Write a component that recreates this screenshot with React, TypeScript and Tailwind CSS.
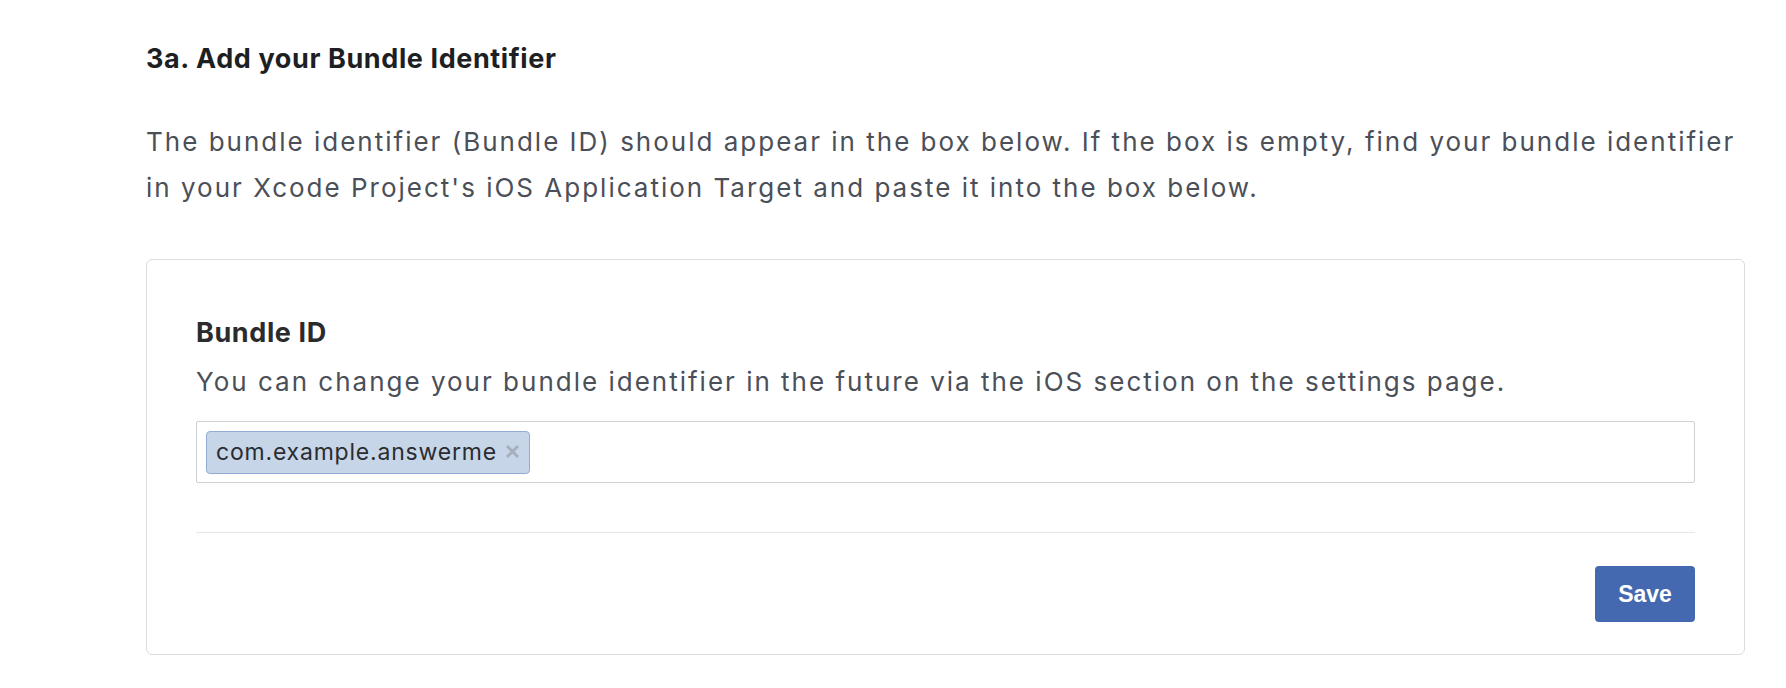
export default function App() {
  const font = { fontFamily: "Inter, 'Noto Sans', sans-serif" };
  return (
    <div className="min-h-screen bg-white pl-[146px] pr-[41px] pt-[43px]" style={font}>
      <h2 className="text-[27px] leading-[32px] font-bold tracking-[0.6px] text-[#1e1f23]">
        3a. Add your Bundle Identifier
      </h2>
      <p className="mt-[44px] whitespace-nowrap text-[26px] leading-[46px] tracking-[2px] text-[#4b4f58]">
        The bundle identifier (Bundle ID) should appear in the box below. If the box is empty, find your bundle identifier
        <br />
        in your Xcode Project's iOS Application Target and paste it into the box below.
      </p>

      <div className="mt-[48px] rounded-[6px] border border-[#dcdce1] px-[49px] pt-[57px] pb-[32px]">
        <div className="text-[27px] leading-[32px] font-bold tracking-[0.6px] text-[#2b2b2e]">Bundle ID</div>
        <div className="mt-[17px] whitespace-nowrap text-[26px] leading-[32px] tracking-[2px] text-[#4b4f58]">
          You can change your bundle identifier in the future via the iOS section on the settings page.
        </div>

        <div className="mt-[23px] flex h-[62px] items-center rounded-[2px] border border-[#cdd0d5] px-[9px]">
          <span className="flex h-[43px] items-center gap-[8px] rounded-[4px] border border-[#93acd6] bg-[#c7d5e9] pl-[9px] pr-[9px] text-[23px] tracking-[0.8px] text-[#2a2c30]">
            com.example.answerme
            <svg width="15" height="15" viewBox="0 0 15 15" className="mt-[-2px]">
              <path d="M2 2L13 13M13 2L2 13" stroke="#a7afba" strokeWidth="3" />
            </svg>
          </span>
        </div>

        <div className="mt-[49px] h-px bg-[#e6e6ea]" />

        <div className="mt-[33px] flex justify-end">
          <button
            className="h-[56px] w-[100px] rounded-[4px] bg-[#4469b0] text-[23px] font-bold text-white"
            style={{ fontFamily: "'Liberation Sans', Arial, sans-serif" }}
          >
            Save
          </button>
        </div>
      </div>
    </div>
  );
}
